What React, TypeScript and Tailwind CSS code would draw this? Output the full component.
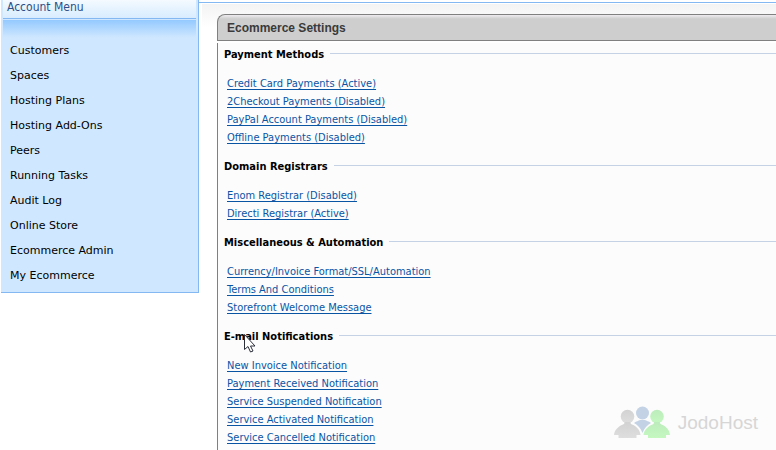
import type { SVGProps } from "react";

interface SettingsGroup {
  title: string;
  links: string[];
}

const menuItems = [
  "Customers",
  "Spaces",
  "Hosting Plans",
  "Hosting Add-Ons",
  "Peers",
  "Running Tasks",
  "Audit Log",
  "Online Store",
  "Ecommerce Admin",
  "My Ecommerce",
];

const groups: SettingsGroup[] = [
  {
    title: "Payment Methods",
    links: [
      "Credit Card Payments (Active)",
      "2Checkout Payments (Disabled)",
      "PayPal Account Payments (Disabled)",
      "Offline Payments (Disabled)",
    ],
  },
  {
    title: "Domain Registrars",
    links: ["Enom Registrar (Disabled)", "Directi Registrar (Active)"],
  },
  {
    title: "Miscellaneous & Automation",
    links: [
      "Currency/Invoice Format/SSL/Automation",
      "Terms And Conditions",
      "Storefront Welcome Message",
    ],
  },
  {
    title: "E-mail Notifications",
    links: [
      "New Invoice Notification",
      "Payment Received Notification",
      "Service Suspended Notification",
      "Service Activated Notification",
      "Service Cancelled Notification",
    ],
  },
];

const AccountMenu = () => (
  <nav className="ml-px w-[198px] shrink-0 self-start border-r border-b border-[#84b8f2] bg-[#d0e8ff] pb-1">
    <h2 className="mx-0.5 h-[19px] border-b border-[#84b8f2] bg-linear-to-b from-[#f4faff] to-[#d8ecff] px-1 font-['DejaVu_Sans_Condensed','DejaVu_Sans',sans-serif] text-[12px] leading-[14px] text-[#2c4f86]">
      Account Menu
    </h2>
    <div className="mx-0.5 mt-px h-[18px] bg-linear-to-b from-[#94c9ff] to-[#d0e8ff]" />
    <ul>
      {menuItems.map((item) => (
        <li key={item}>
          <a
            href="#"
            className="block px-[9px] text-[11px] leading-[25px] text-black"
          >
            {item}
          </a>
        </li>
      ))}
    </ul>
  </nav>
);

const Group = ({ title, links }: SettingsGroup) => (
  <section className="space-y-[11px]">
    <div className="flex items-center gap-[6px]">
      <h3 className="text-[11px] leading-[18px] font-bold text-black">
        {title}
      </h3>
      <div className="mb-1 h-px flex-1 bg-[#c5d2e6]" />
    </div>
    <ul className="pl-[3px]">
      {links.map((link) => (
        <li key={link} className="text-[11px] leading-[18px]">
          <a href="#" className="text-[#0a54a4] underline underline-offset-2">
            {link}
          </a>
        </li>
      ))}
    </ul>
  </section>
);

const Cursor = (props: SVGProps<SVGSVGElement>) => (
  <svg width="14" height="21" viewBox="0 0 14 21" aria-hidden="true" {...props}>
    <path
      d="M1.500 1.500v15l3.500-3 2.500 5.500 2.500-1-2.500-5h4.500z"
      fill="#fff"
      stroke="#2b2f3a"
    />
  </svg>
);

const Watermark = () => (
  <div className="absolute right-[18px] bottom-[10px] flex items-center gap-2">
    <svg width="56" height="33" viewBox="0 0 56 33" aria-hidden="true">
      <defs>
        <linearGradient id="grey" x1="0" y1="0" x2="0" y2="1">
          <stop offset="0" stopColor="#d2d2d2" />
          <stop offset="1" stopColor="#dedede" />
        </linearGradient>
        <linearGradient id="green" x1="0" y1="0" x2="0" y2="1">
          <stop offset="0" stopColor="#bcecbc" />
          <stop offset="1" stopColor="#c4f8c0" />
        </linearGradient>
      </defs>
      <g fill="#c3d2e4">
        <circle cx="28.500" cy="7" r="6.500" />
        <path d="M20 17c2.500-2 4.500-2 6-3h5c1.500 1 3.500 1 6 3-4 2-6.500 5-8.500 10-2-5-4.500-8-8.500-10z" />
      </g>
      <g fill="url(#grey)">
        <circle cx="13.500" cy="10.500" r="6.800" />
        <path d="M0 29c.5-5 4-8.500 9-10.500 1.500-.6 1.500-1.500 1.500-2.500h6c0 1 0 1.900 1.500 2.500 5 2 8 5.500 8.500 10.500h-4v3H4.500v-3z" />
      </g>
      <g fill="url(#green)">
        <circle cx="43" cy="10.500" r="6.800" />
        <path d="M29.500 29c.5-5 4-8.500 9-10.500 1.500-.6 1.500-1.500 1.500-2.500h6c0 1 0 1.900 1.500 2.500 5 2 8 5.500 8.500 10.500h-4v3H34v-3z" />
      </g>
    </svg>
    <span className="font-['Liberation_Sans',Arial,sans-serif] text-[19px] leading-[20px] text-[#d6d6d6]">
      JodoHost
    </span>
  </div>
);

const App = () => {
  return (
    <div className="flex bg-white font-['DejaVu_Sans',Verdana,sans-serif]">
      <AccountMenu />

      <main className="mt-0.5 -ml-px min-w-0 flex-1 border-t border-[#84b8f2] pt-px pl-1">
        <div className="bg-linear-to-b from-[#f3f3f3] to-white to-[24px] pt-2.5 pl-[15px]">
          <h1 className="h-[27px] rounded-tl-lg border-y border-l border-[#808080] bg-linear-to-b from-[#efecef] to-[#cecece] to-[4px] px-[9px] font-['Liberation_Sans',Arial,sans-serif] text-[12px] leading-[27px] font-bold text-[#3a3a3a]">
            Ecommerce Settings
          </h1>
          <div className="relative mt-0.5 space-y-[11px] border-l border-[#808080] bg-[#fcfcfc] pt-[3px] pb-0.5 pl-1.5 font-['DejaVu_Sans_Condensed','DejaVu_Sans',Tahoma,sans-serif]">
            {groups.map((group) => (
              <Group key={group.title} {...group} />
            ))}
            <Watermark />
            <Cursor className="absolute top-[290px] left-[25px]" />
          </div>
        </div>
      </main>
    </div>
  );
};

export default App;
